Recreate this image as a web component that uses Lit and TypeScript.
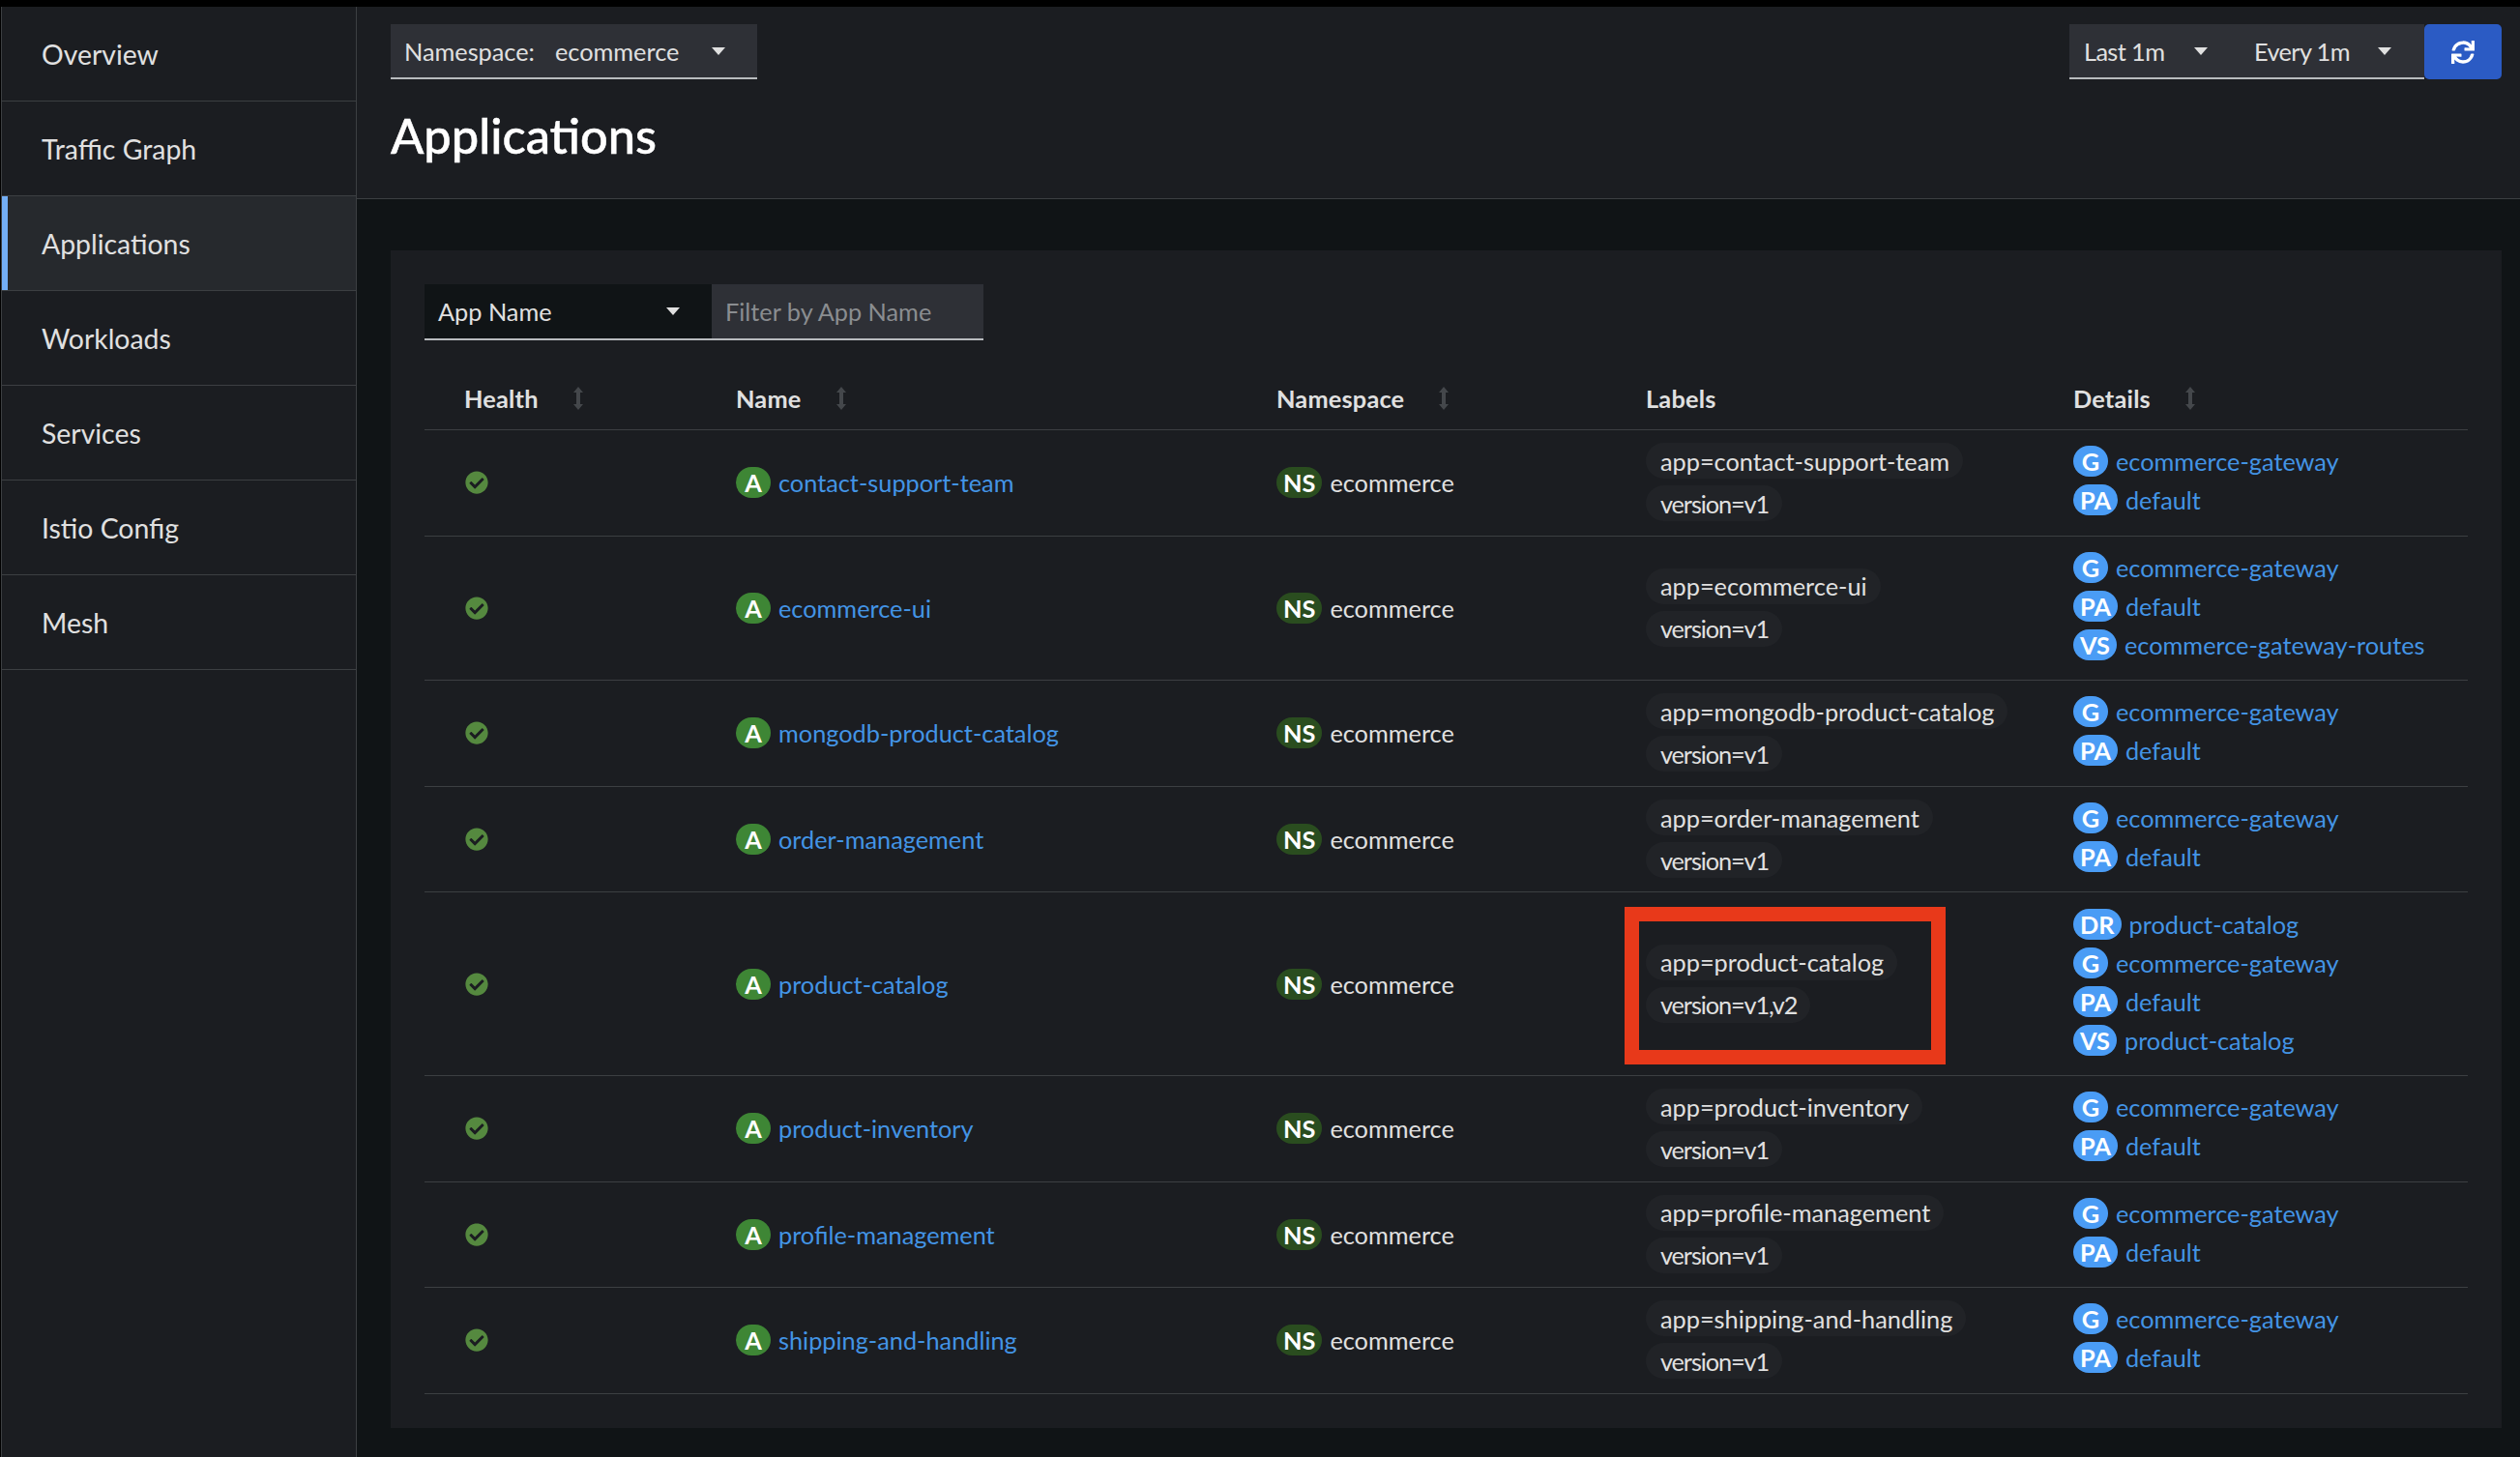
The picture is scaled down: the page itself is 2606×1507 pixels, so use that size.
import { LitElement, html, css, svg } from "lit";
import { customElement } from "lit/decorators.js";

const SYNC = "M440.65 12.57l4 82.77A247.16 247.16 0 0 0 255.83 8C134.73 8 33.91 94.92 12.29 209.82A12 12 0 0 0 24.09 224h49.05a12 12 0 0 0 11.67-9.26 175.91 175.91 0 0 1 317-56.94l-101.46-4.86a12 12 0 0 0-12.57 12v47.41a12 12 0 0 0 12 12H500a12 12 0 0 0 12-12V12a12 12 0 0 0-12-12h-47.37a12 12 0 0 0-11.98 12.57zM255.83 432a175.61 175.61 0 0 1-146-77.8l101.8 4.87a12 12 0 0 0 12.57-12v-47.4a12 12 0 0 0-12-12H12a12 12 0 0 0-12 12V500a12 12 0 0 0 12 12h47.35a12 12 0 0 0 12-12.6l-4.15-82.57A247.17 247.17 0 0 0 255.83 504c121.11 0 221.93-86.92 243.55-201.82a12 12 0 0 0-11.8-14.18h-49.05a12 12 0 0 0-11.67 9.26A175.86 175.86 0 0 1 255.83 432z";
const CHECK = "M504 256c0 136.967-111.033 248-248 248S8 392.967 8 256 119.033 8 256 8s248 111.033 248 248zM227.314 387.314l184-184c6.248-6.248 6.248-16.379 0-22.627l-22.627-22.627c-6.248-6.249-16.379-6.249-22.628 0L216 308.118l-70.059-70.059c-6.248-6.248-16.379-6.248-22.628 0l-22.627 22.627c-6.248 6.248-6.248 16.379 0 22.627l104 104c6.249 6.25 16.379 6.25 22.628.001z";

const caret = html`<svg class="caret" viewBox="0 0 14 8" width="14" height="8"><path d="M0 0h14L7 8z" fill="currentColor"/></svg>`;
const sortIcon = html`<svg class="sort" viewBox="0 0 10 24" width="10" height="24"><path d="M5 0l5 6H7v12h3l-5 6-5-6h3V6H0z" fill="#44474b"/></svg>`;

type Row = { name: string; labels: string[]; details: [string, string][]; boxed?: boolean };
const GW: [string, string] = ["G", "ecommerce-gateway"];
const PA: [string, string] = ["PA", "default"];

const ROWS: Row[] = [
  { name: "contact-support-team", labels: ["app=contact-support-team", "version=v1"], details: [GW, PA] },
  { name: "ecommerce-ui", labels: ["app=ecommerce-ui", "version=v1"], details: [GW, PA, ["VS", "ecommerce-gateway-routes"]] },
  { name: "mongodb-product-catalog", labels: ["app=mongodb-product-catalog", "version=v1"], details: [GW, PA] },
  { name: "order-management", labels: ["app=order-management", "version=v1"], details: [GW, PA] },
  { name: "product-catalog", labels: ["app=product-catalog", "version=v1,v2"], details: [["DR", "product-catalog"], GW, PA, ["VS", "product-catalog"]], boxed: true },
  { name: "product-inventory", labels: ["app=product-inventory", "version=v1"], details: [GW, PA] },
  { name: "profile-management", labels: ["app=profile-management", "version=v1"], details: [GW, PA] },
  { name: "shipping-and-handling", labels: ["app=shipping-and-handling", "version=v1"], details: [GW, PA] },
];
const NAV = ["Overview", "Traffic Graph", "Applications", "Workloads", "Services", "Istio Config", "Mesh"];

@customElement("app-root")
export class AppRoot extends LitElement {
  static styles = css`
    :host { display: block; height: 1507px; background: #000; font-family: "Lato", "Liberation Sans", sans-serif; font-size: 25.3px; color: #e0e0e0; overflow: hidden; }
    * { box-sizing: border-box; }
    .shell { display: flex; height: 1507px; padding-top: 7px; }
    .side { width: 368px; margin-left: 1px; flex: none; background: #1b1d21; border-left: 1px solid #3c3f42; border-right: 1px solid #3c3f42; }
    .nav { height: 98px; display: flex; align-items: center; padding-left: 41px; font-size: 28.4px; border-bottom: 1px solid #3c3f42; color: #e0e0e0; }
    .nav.active { background: #26292d; box-shadow: inset 6px 0 0 #73aef5; }
    .content { flex: 1; display: flex; flex-direction: column; background: #101416; min-width: 0; }
    .head { height: 199px; flex: none; background: #1b1d21; border-bottom: 1px solid #3c3f42; padding: 18px 19px 0 35px; }
    .bar { display: flex; justify-content: space-between; }
    .select { display: flex; align-items: center; height: 57px; background: #2e3036; border-bottom: 2px solid #b8bbbe; }
    .ns { width: 379px; padding: 0 33px 0 14px; }
    .ns .val { margin-left: 21px; flex: 1; }
    .right { display: flex; }
    .times { width: 367px; padding-left: 15px; letter-spacing: -0.6px; }
    .t1 { width: 114px; }
    .t2 { width: 128px; margin-left: 48px; }
    .refresh { width: 80px; height: 57px; background: #2b5bc4; border-radius: 5px; display: flex; align-items: center; justify-content: center; border: 0; padding: 0; }
    .refresh svg { width: 24px; height: 24px; fill: #fff; display: block; }
    h1 { margin: 23px 0 0; font-size: 50.5px; font-weight: 500; line-height: 1.4; color: #fff; -webkit-text-stroke: 0.5px #fff; }
    .main { padding: 53px 19px 0 35px; flex: 1; }
    .card { height: 1218px; background: #1b1d21; padding: 35px 35px 0; }
    .filter { display: flex; height: 58px; width: 578px; border-bottom: 2px solid #b8bbbe; }
    .fsel { width: 297px; background: #101416; display: flex; align-items: center; justify-content: space-between; padding: 0 33px 0 14px; }
    .finp { flex: 1; background: #2e3036; color: #8a8d90; display: flex; align-items: center; padding-left: 14px; }
    .row { display: grid; grid-template-columns: 281px 559px 382px 442px 1fr; padding-left: 41px; align-items: center; position: relative; border-bottom: 1px solid #3c3f42; }
    .row.body { padding-top: 14.3px; padding-bottom: 14.3px; }
    .row.header { height: 93px; font-weight: 700; padding-top: 28px; letter-spacing: 0.2px; }
    .th { display: flex; align-items: center; }
    .sort { margin-left: 36px; display: block; }
    .health svg { width: 24px; height: 24px; margin-left: 1px; fill: #55893f; display: block; }
    .cell { display: flex; align-items: center; gap: 8px; }
    .badge { display: inline-flex; align-items: center; justify-content: center; height: 32px; min-width: 36px; padding: 0 7px; border-radius: 16px; font-weight: 700; color: #fff; flex: none; }
    .g { background: #3e8635; }
    .dg { background: #2a4d1f; }
    .b { background: #4a9cf5; }
    a { color: #4394e5; text-decoration: none; }
    .labels { display: flex; flex-direction: column; align-items: flex-start; gap: 7px; margin: -1px 0 0; }
    .chip { height: 37px; border-radius: 19px; background: #212327; padding: 0 14px 0 15px; display: flex; align-items: center; }
    .chip.ver { letter-spacing: -1.1px; }
    .details { margin: -2px 0 2px; }
    .dline { height: 40px; display: flex; align-items: center; gap: 8px; }
    .box { position: absolute; left: 1241px; top: 15px; width: 332px; height: 163px; border: 15px solid #e8391a; pointer-events: none; }
  `;

  render() {
    return html`<div class="shell">
      <nav class="side">
        ${NAV.map((n) => html`<div class="nav ${n === "Applications" ? "active" : ""}">${n}</div>`)}
      </nav>
      <div class="content">
        <header class="head">
          <div class="bar">
            <div class="select ns"><span>Namespace:</span><span class="val">ecommerce</span>${caret}</div>
            <div class="right">
              <div class="select times"><span class="t1">Last 1m</span>${caret}<span class="t2">Every 1m</span>${caret}</div>
              <button class="refresh"><svg viewBox="0 0 512 512">${svg`<path d=${SYNC}/>`}</svg></button>
            </div>
          </div>
          <h1>Applications</h1>
        </header>
        <main class="main">
          <section class="card">
            <div class="filter">
              <div class="fsel"><span>App Name</span>${caret}</div>
              <div class="finp">Filter by App Name</div>
            </div>
            <div class="row header">
              <div class="th">Health${sortIcon}</div>
              <div class="th">Name${sortIcon}</div>
              <div class="th">Namespace${sortIcon}</div>
              <div class="th">Labels</div>
              <div class="th">Details${sortIcon}</div>
            </div>
            ${ROWS.map((r) => html`<div class="row body">
              <div class="health"><svg viewBox="0 0 512 512">${svg`<path d=${CHECK}/>`}</svg></div>
              <div class="cell"><span class="badge g">A</span><a>${r.name}</a></div>
              <div class="cell"><span class="badge dg">NS</span><span>ecommerce</span></div>
              <div class="labels">${r.labels.map((l) => html`<span class="chip ${l.startsWith("version") ? "ver" : ""}">${l}</span>`)}</div>
              <div class="details">${r.details.map(([b, t]) => html`<div class="dline"><span class="badge b">${b}</span><a>${t}</a></div>`)}</div>
              ${r.boxed ? html`<div class="box"></div>` : ""}
            </div>`)}
          </section>
        </main>
      </div>
    </div>`;
  }
}
